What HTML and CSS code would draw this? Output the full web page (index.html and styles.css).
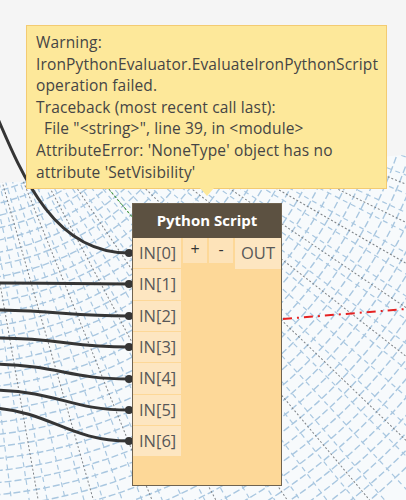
FILE: index.html
```html
<!DOCTYPE html>
<html>
<head>
<meta charset="utf-8">
<link rel="stylesheet" href="styles.css">
</head>
<body>
<div class="canvas">
  <svg class="bg" width="406" height="500" viewBox="0 0 406 500" xmlns="http://www.w3.org/2000/svg">
    <defs>
      <clipPath id="plane"><polygon points="0,183 406,155 406,500 0,500"/></clipPath>
    </defs>
    <g clip-path="url(#plane)">
      <rect x="0" y="0" width="406" height="500" fill="#f7fafc"/>
      <g transform="translate(-50,0)" fill="none" stroke="#a9c7e0" stroke-width="1.4" stroke-dasharray="7 3">
        <circle r="185"/><circle r="197"/><circle r="209"/><circle r="221"/><circle r="233"/><circle r="245"/>
        <circle r="257"/><circle r="269"/><circle r="281"/><circle r="293"/><circle r="305"/><circle r="317"/>
        <circle r="329"/><circle r="341"/><circle r="353"/><circle r="365"/><circle r="377"/><circle r="389"/>
        <circle r="401"/><circle r="413"/><circle r="425"/><circle r="437"/><circle r="449"/><circle r="461"/>
        <circle r="473"/><circle r="485"/><circle r="497"/><circle r="509"/><circle r="521"/><circle r="533"/>
        <circle r="545"/><circle r="557"/><circle r="569"/><circle r="581"/><circle r="593"/><circle r="605"/>
        <circle r="617"/><circle r="629"/><circle r="641"/><circle r="653"/>
      </g>
      <g transform="translate(-50,0)" stroke="#a9c7e0" stroke-width="1.2" stroke-dasharray="5 4">
        <line x1="0" y1="0" x2="900" y2="0" transform="rotate(11)"/>
        <line x1="0" y1="0" x2="900" y2="0" transform="rotate(13)"/>
        <line x1="0" y1="0" x2="900" y2="0" transform="rotate(15)"/>
        <line x1="0" y1="0" x2="900" y2="0" transform="rotate(17)"/>
        <line x1="0" y1="0" x2="900" y2="0" transform="rotate(19)"/>
        <line x1="0" y1="0" x2="900" y2="0" transform="rotate(21)"/>
        <line x1="0" y1="0" x2="900" y2="0" transform="rotate(23)"/>
        <line x1="0" y1="0" x2="900" y2="0" transform="rotate(25)"/>
        <line x1="0" y1="0" x2="900" y2="0" transform="rotate(27)"/>
        <line x1="0" y1="0" x2="900" y2="0" transform="rotate(29)"/>
        <line x1="0" y1="0" x2="900" y2="0" transform="rotate(31)"/>
        <line x1="0" y1="0" x2="900" y2="0" transform="rotate(33)"/>
        <line x1="0" y1="0" x2="900" y2="0" transform="rotate(35)"/>
        <line x1="0" y1="0" x2="900" y2="0" transform="rotate(37)"/>
        <line x1="0" y1="0" x2="900" y2="0" transform="rotate(39)"/>
        <line x1="0" y1="0" x2="900" y2="0" transform="rotate(41)"/>
        <line x1="0" y1="0" x2="900" y2="0" transform="rotate(43)"/>
        <line x1="0" y1="0" x2="900" y2="0" transform="rotate(45)"/>
        <line x1="0" y1="0" x2="900" y2="0" transform="rotate(47)"/>
        <line x1="0" y1="0" x2="900" y2="0" transform="rotate(49)"/>
        <line x1="0" y1="0" x2="900" y2="0" transform="rotate(51)"/>
        <line x1="0" y1="0" x2="900" y2="0" transform="rotate(53)"/>
        <line x1="0" y1="0" x2="900" y2="0" transform="rotate(55)"/>
        <line x1="0" y1="0" x2="900" y2="0" transform="rotate(57)"/>
        <line x1="0" y1="0" x2="900" y2="0" transform="rotate(59)"/>
        <line x1="0" y1="0" x2="900" y2="0" transform="rotate(61)"/>
        <line x1="0" y1="0" x2="900" y2="0" transform="rotate(63)"/>
        <line x1="0" y1="0" x2="900" y2="0" transform="rotate(65)"/>
        <line x1="0" y1="0" x2="900" y2="0" transform="rotate(67)"/>
        <line x1="0" y1="0" x2="900" y2="0" transform="rotate(69)"/>
        <line x1="0" y1="0" x2="900" y2="0" transform="rotate(71)"/>
        <line x1="0" y1="0" x2="900" y2="0" transform="rotate(73)"/>
        <line x1="0" y1="0" x2="900" y2="0" transform="rotate(75)"/>
        <line x1="0" y1="0" x2="900" y2="0" transform="rotate(77)"/>
        <line x1="0" y1="0" x2="900" y2="0" transform="rotate(79)"/>
        <line x1="0" y1="0" x2="900" y2="0" transform="rotate(81)"/>
        <line x1="0" y1="0" x2="900" y2="0" transform="rotate(83)"/>
        <line x1="0" y1="0" x2="900" y2="0" transform="rotate(85)"/>
      </g>
      <g transform="translate(-50,0)" stroke="#7f8489" stroke-width="1" stroke-dasharray="2 2">
        <line x1="0" y1="0" x2="900" y2="0" transform="rotate(14)"/>
        <line x1="0" y1="0" x2="900" y2="0" transform="rotate(18)"/>
        <line x1="0" y1="0" x2="900" y2="0" transform="rotate(22)"/>
        <line x1="0" y1="0" x2="900" y2="0" transform="rotate(26)"/>
        <line x1="0" y1="0" x2="900" y2="0" transform="rotate(30)"/>
        <line x1="0" y1="0" x2="900" y2="0" transform="rotate(34)"/>
        <line x1="0" y1="0" x2="900" y2="0" transform="rotate(38)"/>
        <line x1="0" y1="0" x2="900" y2="0" transform="rotate(44)"/>
        <line x1="0" y1="0" x2="900" y2="0" transform="rotate(50)"/>
        <line x1="0" y1="0" x2="900" y2="0" transform="rotate(56)"/>
        <line x1="0" y1="0" x2="900" y2="0" transform="rotate(62)"/>
        <line x1="0" y1="0" x2="900" y2="0" transform="rotate(68)"/>
        <line x1="0" y1="0" x2="900" y2="0" transform="rotate(74)"/>
        <line x1="0" y1="0" x2="900" y2="0" transform="rotate(80)"/>
      </g>
    </g>
    <line x1="108" y1="188" x2="134" y2="219" stroke="#3aa43a" stroke-width="1" stroke-dasharray="3 2"/>
    <line x1="283" y1="319" x2="406" y2="309" stroke="#e52222" stroke-width="2" stroke-dasharray="9 5 2 5"/>
    <g fill="none" stroke="#353535" stroke-width="3" stroke-linecap="round">
      <path d="M -10 100 C 20 170, 50 253, 129 253"/>
      <path d="M -5 283 C 40 283, 80 284, 129 284"/>
      <path d="M -5 310 C 60 311, 70 316, 129 316"/>
      <path d="M -5 338 C 60 338, 70 347, 129 347"/>
      <path d="M -5 364 C 60 366, 70 379, 129 379"/>
      <path d="M -5 390 C 60 392, 70 410, 129 410"/>
      <path d="M -5 408 C 50 412, 70 441, 129 441"/>
    </g>
    <g fill="#353535">
      <circle cx="129" cy="253" r="4"/>
      <circle cx="129" cy="284" r="4"/>
      <circle cx="129" cy="316" r="4"/>
      <circle cx="129" cy="347" r="4"/>
      <circle cx="129" cy="379" r="4"/>
      <circle cx="129" cy="410" r="4"/>
      <circle cx="129" cy="441" r="4"/>
    </g>
  </svg>

  <div class="tooltip">
    <div class="tip-line">Warning:</div>
    <div class="tip-line">IronPythonEvaluator.EvaluateIronPythonScript</div>
    <div class="tip-line">operation failed.</div>
    <div class="tip-line">Traceback (most recent call last):</div>
    <div class="tip-line indent">File "&lt;string&gt;", line 39, in &lt;module&gt;</div>
    <div class="tip-line">AttributeError: 'NoneType' object has no</div>
    <div class="tip-line">attribute 'SetVisibility'</div>
    <div class="tip-arrow"></div>
  </div>

  <div class="node">
    <div class="node-header">Python Script</div>
    <div class="node-body">
      <div class="ports">
        <div class="port">IN[0]</div>
        <div class="port">IN[1]</div>
        <div class="port">IN[2]</div>
        <div class="port">IN[3]</div>
        <div class="port">IN[4]</div>
        <div class="port">IN[5]</div>
        <div class="port">IN[6]</div>
      </div>
      <div class="btn">+</div>
      <div class="btn">-</div>
      <div class="out">OUT</div>
    </div>
  </div>
</div>
</body>
</html>
```
FILE: styles.css
```css
html, body {
  margin: 0;
  padding: 0;
}
body {
  background: #f5f5f5;
  font-family: "Open Sans", "Noto Sans", sans-serif;
}
.canvas {
  position: relative;
  width: 406px;
  height: 500px;
  overflow: hidden;
}
.bg {
  position: absolute;
  left: 0;
  top: 0;
}
.tooltip {
  position: absolute;
  left: 26px;
  top: 25px;
  width: 341px;
  height: 151px;
  padding: 6px 9px 5px 9px;
  background: #fde89a;
  border: 1px solid #f3cb72;
  color: #454545;
  font-size: 15.5px;
  letter-spacing: 0.15px;
  line-height: 21.6px;
}
.tip-line {
  white-space: nowrap;
}
.tip-line.indent {
  padding-left: 8px;
}
.tip-arrow {
  position: absolute;
  left: 173px;
  bottom: -8px;
  width: 14px;
  height: 8px;
  background: #fde89a;
  clip-path: polygon(0 0, 100% 0, 50% 100%);
}
.node {
  position: absolute;
  left: 132px;
  top: 203px;
  width: 148px;
  height: 281px;
  border: 1px solid #6f6350;
  background: #fdd898;
  display: flex;
  flex-direction: column;
}
.node-header {
  height: 34px;
  background: #5c5141;
  color: #ffffff;
  font-weight: bold;
  font-size: 15px;
  line-height: 33px;
  text-align: center;
}
.node-body {
  display: flex;
  align-items: flex-start;
  gap: 2px;
  color: #585858;
  font-size: 16.5px;
}
.ports {
  width: 48px;
  display: flex;
  flex-direction: column;
  gap: 1px;
}
.port {
  height: 30.33px;
  line-height: 30px;
  padding-left: 6px;
  background: #fde6c1;
}
.btn {
  width: 24px;
  height: 25px;
  line-height: 23px;
  text-align: center;
  background: #fde3b9;
  font-size: 16px;
  color: #333;
}
.out {
  width: 46px;
  height: 31px;
  line-height: 30px;
  text-align: center;
  background: #fde6c1;
}
```
